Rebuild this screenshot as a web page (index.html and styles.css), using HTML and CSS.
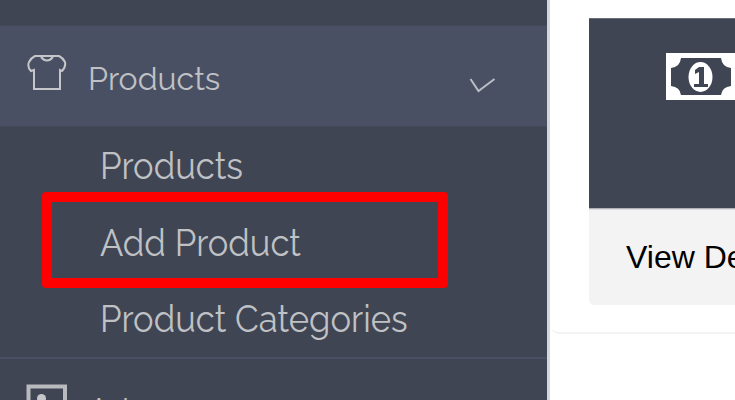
FILE: index.html
```html
<!DOCTYPE html>
<html lang="en">
<head>
<meta charset="utf-8">
<title>Products</title>
<link rel="stylesheet" href="styles.css">
</head>
<body>
<div class="app">
  <nav class="sidebar">
    <div class="previous"></div>
    <div class="item active">
      <svg class="icon" width="42" height="38" viewBox="0 0 42 38"><path d="M9 2H33Q37 4 39 8Q40 13 36 17L34 16V35H8V16L5 17Q1 13 3 8Q5 4 9 2Z M15 3Q21 10 27 3"/></svg>
      <span class="label">Products</span>
      <svg class="chevron" width="28" height="18" viewBox="0 0 28 18"><path d="M1.500 2L9.500 14L25.500 2"/></svg>
    </div>
    <div class="submenu">
      <a class="sub"><span>Products</span></a>
      <a class="sub highlighted"><span>Add Product</span></a>
      <a class="sub third"><span>Product Categories</span></a>
    </div>
    <div class="item next">
      <svg class="picture" width="42" height="38" viewBox="0 0 42 38"><path class="frame" d="M2.500 2.500H39V36H2.500Z"/><circle cx="15.500" cy="14.500" r="4.500"/></svg>
      <span class="label">Ads</span>
    </div>
  </nav>
  <main class="content">
    <section class="panel">
      <div class="card">
        <div class="card-head">
          <svg width="78" height="48" viewBox="0 0 78 48"><path fill="#fff" fill-rule="evenodd" d="M1 0H78V47H1Z M16 5Q15 14 6 15V33Q15 34 16 42H56Q57 34 66 33V15Q57 14 56 5Z"/><ellipse cx="35.500" cy="24" rx="12" ry="15" fill="#fff"/><path fill="#404553" d="M34 14H39V31H43V34H29V31H34V19L30 21V17Z"/></svg>
        </div>
        <div class="card-foot">View Details</div>
      </div>
    </section>
  </main>
</div>
</body>
</html>
```
FILE: styles.css
```css
* { box-sizing: border-box; }
body { margin: 0; background: #fff; }
.app { display: flex; width: 735px; height: 400px; overflow: hidden; }
.sidebar {
  flex: 0 0 550px;
  height: 400px;
  overflow: hidden;
  background: #404553;
  border-right: 3px solid #d5d6dc;
  color: #bfc1c5;
  font-family: Raleway, Lato, sans-serif;
}
.previous { height: 25px; }
.item { display: flex; }
.active { height: 102px; background: #4a5064; border-bottom: 1px solid #454a5b; border-top: 1px solid #454a5b; }
.icon { flex: none; margin: 28px 0 0 26px; fill: none; stroke: #c5c6c9; stroke-width: 2; }
.label { margin: 33px 0 0 20px; height: 40px; font-size: 32px; line-height: 40px; font-weight: 400; white-space: nowrap; }
.chevron { flex: none; margin: 51px 50px 0 auto; fill: none; stroke: #b9bdc5; stroke-width: 2; }
.submenu { height: 230px; padding: 19px 0 0 42px; }
.sub { display: block; width: 406px; height: 40px; padding-left: 57.5px; color: #bfc1c5; white-space: nowrap; }
.sub span { display: inline-block; font-size: 37.5px; line-height: 40px; font-weight: 400; transform-origin: left; transform: scaleX(.922); }
.sub.highlighted { height: 96px; margin-top: 6px; border: 10px solid #f00; border-radius: 4px; padding: 21px 0 0 47.5px; }
.sub.third { margin-top: 11px; }
.next { border-top: 2px solid #4a5064; height: 90px; }
.next .label { margin-top: 31px; }
.picture { flex: none; margin: 25px 0 0 26px; fill: #c5c6c9; }
.frame { fill: none; stroke: #b9babd; stroke-width: 4; }
.content { flex: 1; min-width: 0; overflow: hidden; }
.panel { height: 334px; width: 230px; padding: 18px 0 0 39px; border-bottom: 2px solid #f3f3f3; border-bottom-left-radius: 9px; }
.card { width: 220px; height: 287px; background: #f3f3f3; border-radius: 0 0 5px 5px; overflow: hidden; }
.card-head { height: 191px; background: #404553; border-top: 1px solid #6b6f7b; border-bottom: 1px solid #b0b2b8; padding: 34px 0 0 76px; }
.card-head svg { display: block; }
.card-foot { height: 96px; border-top: 1px solid #ddd; padding-left: 37px; font: 32px/95px "Liberation Sans", Arial, sans-serif; color: #000; white-space: nowrap; }
```
